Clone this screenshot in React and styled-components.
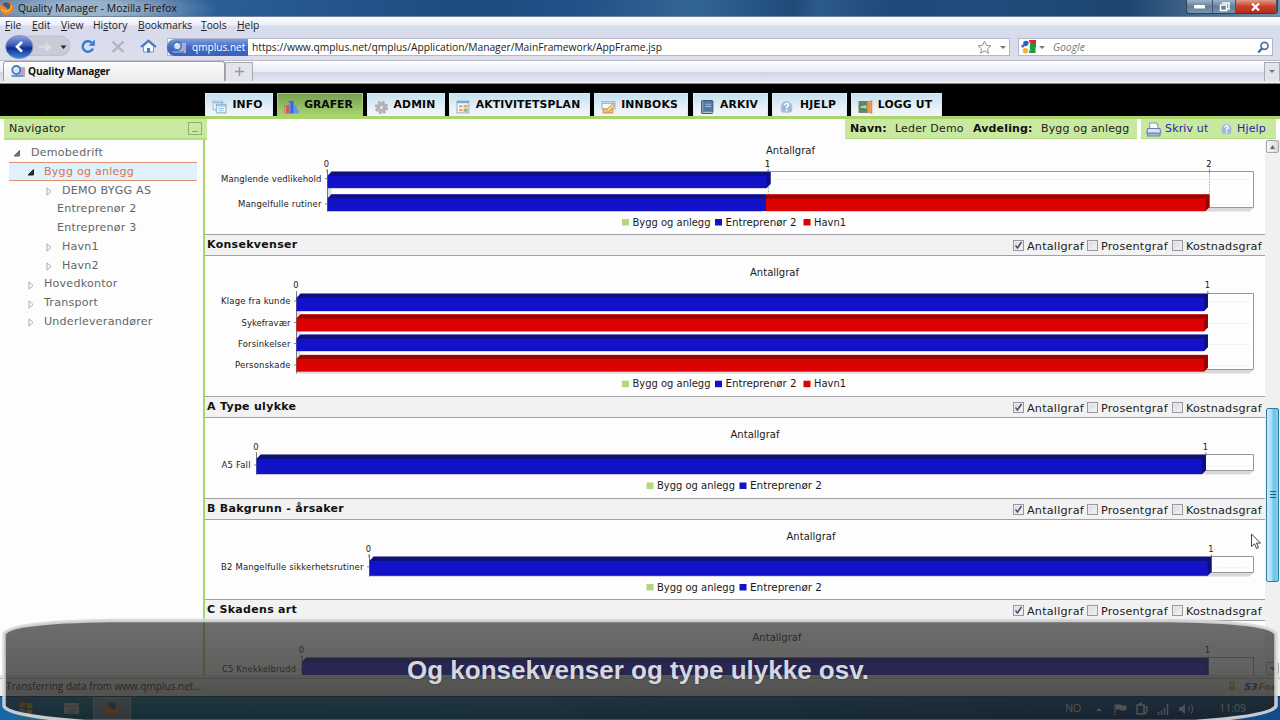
import React from 'react'
import styled, { createGlobalStyle, css } from 'styled-components'

const ui = `'Open Sans', 'Noto Sans', sans-serif`
const app = `'DejaVu Sans', Verdana, sans-serif`
const lime = '#a9d56b'
const pale = '#c9e8a0'
const BLUE = '#1212c8'
const RED = '#dc0202'
const GREEN = '#b4d67c'

const GlobalStyle = createGlobalStyle`
  * { box-sizing: border-box; }
  body { margin: 0; background: #fdfdfd; overflow: hidden; }
  svg { display: block; flex: none; }
`

/* ---------- data ---------- */

const menus = [
  { pre: '', key: 'F', rest: 'ile', width: 27 },
  { pre: '', key: 'E', rest: 'dit', width: 29 },
  { pre: '', key: 'V', rest: 'iew', width: 32 },
  { pre: 'Hi', key: 's', rest: 'tory', width: 45 },
  { pre: '', key: 'B', rest: 'ookmarks', width: 63 },
  { pre: '', key: 'T', rest: 'ools', width: 36 },
  { pre: '', key: 'H', rest: 'elp', width: 30 },
]

const tabs = [
  { label: 'INFO', icon: 'info', width: 68, gap: 4 },
  { label: 'GRAFER', icon: 'chart', width: 86, gap: 4, active: true },
  { label: 'ADMIN', icon: 'gear', width: 78, gap: 4 },
  { label: 'AKTIVITETSPLAN', icon: 'calendar', width: 141, gap: 4 },
  { label: 'INNBOKS', icon: 'inbox', width: 94, gap: 5 },
  { label: 'ARKIV', icon: 'book', width: 75, gap: 4 },
  { label: 'HJELP', icon: 'help', width: 75, gap: 4 },
  { label: 'LOGG UT', icon: 'exit', width: 91, gap: 0 },
]

const tree = [
  { label: 'Demobedrift', pad: 13, text: 31, state: 'open' },
  { label: 'Bygg og anlegg', pad: 27, text: 44, state: 'open', selected: true },
  { label: 'DEMO BYGG AS', pad: 45, text: 62, state: 'closed' },
  { label: 'Entreprenør 2', pad: 40, text: 57 },
  { label: 'Entreprenør 3', pad: 40, text: 57 },
  { label: 'Havn1', pad: 45, text: 62, state: 'closed' },
  { label: 'Havn2', pad: 45, text: 62, state: 'closed' },
  { label: 'Hovedkontor', pad: 27, text: 44, state: 'closed' },
  { label: 'Transport', pad: 27, text: 44, state: 'closed' },
  { label: 'Underleverandører', pad: 27, text: 44, state: 'closed' },
]

const legend3 = [
  { x: 622, w: 78, label: 'Bygg og anlegg', color: GREEN },
  { x: 715, w: 71, label: 'Entreprenør 2', color: BLUE },
  { x: 803.5, w: 32, label: 'Havn1', color: RED },
]
const legend2 = [
  { x: 646.5, w: 78, label: 'Bygg og anlegg', color: GREEN },
  { x: 739.5, w: 72, label: 'Entreprenør 2', color: BLUE },
]

// chart coordinates are page pixels, each svg has its own window onto them
const charts = {
  causes: {
    top: 140, height: 94, titleX: 790.5, titleY: 154, tickY: 166.5, axis: 327.5, frame: [171.5, 207.5],
    ticks: [[326.5, '0'], [767.5, '1'], [1209, '2']], grid: [[768.5, 160, 194], [1209.5, 160, 194]],
    rows: [
      { label: 'Manglende vedlikehold', w: 100.5, y: 181.5, bar: [172, 188], parts: [[327.5, 770.5, BLUE]] },
      { label: 'Mangelfulle rutiner', w: 83.5, y: 207, bar: [194.5, 211], parts: [[327.5, 766, BLUE], [766, 1209.5, RED]] },
    ],
    legend: legend3, legendY: 222,
  },
  consequences: {
    top: 256, height: 140, titleX: 774.5, titleY: 276, tickY: 288, axis: 296.5, frame: [293.5, 369.5],
    ticks: [[296, '0'], [1207.5, '1']], grid: [[1207.5, 291, 294]],
    rows: [
      { label: 'Klage fra kunde', w: 69.5, y: 304, bar: [294, 311], parts: [[296.5, 1208, BLUE]] },
      { label: 'Sykefravær', w: 49, y: 325.5, bar: [314.5, 331.3], parts: [[296.5, 1208, RED]] },
      { label: 'Forsinkelser', w: 52.5, y: 346.5, bar: [334.8, 351], parts: [[296.5, 1208, BLUE]] },
      { label: 'Personskade', w: 55.5, y: 368, bar: [355, 371.5], parts: [[296.5, 1208, RED]] },
    ],
    legend: legend3, legendY: 383.7,
  },
  accident: {
    top: 418, height: 80, titleX: 755, titleY: 438, tickY: 449.5, axis: 256.5, frame: [454.5, 470.5],
    ticks: [[256, '0'], [1205.5, '1']], grid: [],
    rows: [{ label: 'A5 Fall', w: 29, y: 468, bar: [455, 474], parts: [[256.5, 1206, BLUE]] }],
    legend: legend2, legendY: 485.5,
  },
  background: {
    top: 520, height: 79, titleX: 811, titleY: 539.5, tickY: 551.5, axis: 369.5, frame: [556.5, 572.5],
    ticks: [[368.5, '0'], [1211, '1']], grid: [],
    rows: [{ label: 'B2 Mangelfulle sikkerhetsrutiner', w: 142.5, y: 569.8, bar: [557, 575.7], parts: [[369.5, 1211.5, BLUE]] }],
    legend: legend2, legendY: 587,
  },
  injury: {
    top: 621, height: 54, titleX: 777, titleY: 641, tickY: 653, axis: 302, frame: [657.5, 680],
    ticks: [[301.5, '0'], [1207.5, '1']], grid: [],
    rows: [{ label: 'C5 Knekkelbrudd', w: 74, y: 672, bar: [658, 679], parts: [[302, 1208.5, BLUE]] }],
    legend: [], legendY: 0,
  },
}

/* ---------- browser chrome ---------- */

const Window = styled.div`
  position: relative;
  display: flex;
  flex-direction: column;
  width: 1280px;
  height: 720px;
  overflow: hidden;
  font-family: ${app};
  color: #111;
`

const TitleBar = styled.header`
  display: flex;
  justify-content: space-between;
  height: 17px;
  border-bottom: 1px solid #70849c;
  background:
    radial-gradient(ellipse 130px 24px at 88px 9px, rgba(170, 190, 210, .85) 30%, transparent),
    linear-gradient(100deg, #44709f 0, #2d5f98 15%, #1d4a80 37%, #225088 45%, #336594 54%, #1f4b79 62%, #2c5a8a 64%, #1d4878 70%, #214c7c 76%, #1c456f 88%, #7090ae 100%);
`

const TitleText = styled.div`
  display: flex;
  align-items: center;
  gap: 4px;
  font: 10.4px/16px ${ui};
  color: #111;
`

const WindowButtons = styled.div`
  display: flex;
  width: 92px;
  height: 14px;
  margin-right: 2px;
  border: 1px solid #2b3f55;
  border-top: 0;
  border-radius: 0 0 4px 4px;
  overflow: hidden;
`

const WindowButton = styled.span`
  display: flex;
  align-items: center;
  justify-content: center;
  width: ${p => p.$width}px;
  border-right: 1px solid #40566f;
  background: ${p => p.$close
    ? 'linear-gradient(#e09a8a, #c8402c 50%, #b82a18)'
    : 'linear-gradient(#9db2c8, #637f9d 50%, #7a94ae)'};
`

const MenuBar = styled.nav`
  display: flex;
  height: 18px;
  padding-left: 5px;
  background: linear-gradient(#fbfcfe 0, #eceef7 45%, #d8dbeb 50%, #d8dbeb);
  font: 10.3px/17px ${ui};
  color: #222;
`

const MenuItem = styled.span`
  width: ${p => p.$width}px;
  white-space: nowrap;
`

const Toolbar = styled.div`
  display: flex;
  align-items: center;
  height: 25px;
  padding: 0 7px 0 4px;
  background: linear-gradient(#d8dbeb, #dddfec);
`

const Field = styled.div`
  display: flex;
  align-items: center;
  width: ${p => p.$width}px;
  height: 18px;
  margin-left: ${p => p.$gap}px;
  border: 1px solid #b4b8c6;
  background: #fff;
  font: 10.25px/16px ${ui};
  color: #222;
`

const SiteBadge = styled.span`
  display: flex;
  align-items: center;
  gap: 6px;
  width: 81px;
  height: 17px;
  margin: 0 4px 0 -1px;
  padding-left: 4px;
  border-radius: 8px 0 0 8px;
  background: linear-gradient(#7f9fe0, #4168c4 50%, #3a62bd);
  font-size: 10.1px;
  color: #fff;
`

const SearchHint = styled.span`
  display: flex;
  align-items: center;
  flex: 1;
  padding-left: 2px;
  font-size: 10.4px;
  font-style: italic;
  color: #777;
`

const Grow = styled.span`
  flex: 1;
`

const Caret = styled.i`
  width: 0;
  margin: 0 ${p => p.$right || p.$gap}px 0 ${p => p.$gap}px;
  border: 3px solid transparent;
  border-top-color: #777;
  border-bottom: 0;
`

const TabStrip = styled.div`
  display: flex;
  align-items: flex-end;
  height: 24px;
  padding: 0 0 2px 3px;
  border-top: 1px solid #b9bccb;
  border-bottom: 1px solid #8a8a8a;
  background: linear-gradient(#fdfdff, #e9ebf6 48%, #d3d6e6 52%, #e2e4ec 88%, #f4f4f4);
`

const BrowserTab = styled.div`
  display: flex;
  align-items: center;
  gap: 3px;
  width: 222px;
  height: 20px;
  padding-left: 6px;
  border: 1px solid #9a9ca6;
  border-bottom: 0;
  border-radius: 3px 3px 0 0;
  background: linear-gradient(#fcfcfc, #ebebeb);
  font: bold 10.2px/18px ${ui};
  letter-spacing: -.2px;
  color: #111;
`

const StripButton = styled.span`
  display: flex;
  align-items: center;
  justify-content: center;
  width: ${p => p.$width}px;
  height: 19px;
  border: 1px solid #a8aab4;
  border-bottom: 0;
  background: #e4e5ec;
`

/* ---------- application ---------- */

const AppBar = styled.nav`
  display: flex;
  align-items: flex-end;
  height: 36px;
  padding-left: 205px;
  border-bottom: 3px solid ${lime};
  background: #000;
`

const AppTab = styled.div`
  display: flex;
  align-items: center;
  width: ${p => p.$width}px;
  height: 23px;
  margin-right: ${p => p.$gap}px;
  padding: 0 0 1px 6px;
  border: 1px solid #d8ecf4;
  border-bottom: 0;
  background: linear-gradient(#c4e1f0, #ecf2f8 70%, #f2f4f8);
  font-size: 10.8px;
  font-weight: bold;
  letter-spacing: .15px;
  white-space: nowrap;
  color: #080808;

  svg { margin: 5px 0 0; }

  ${p => p.$active && css`
    border-color: #a5cf78;
    background: linear-gradient(#789f50, #98c668 70%, ${lime});
    letter-spacing: 0;
  `}
`

const TabLabel = styled.span`
  flex: 1;
  text-align: center;
  padding-right: 4px;
`

const Body = styled.div`
  display: flex;
  height: 556px;
  background: #fdfdfd;
`

const Sidebar = styled.aside`
  width: 205px;
  border-right: 2px solid ${lime};
  font-size: 11.1px;
  letter-spacing: .22px;
`

const PanelHeader = styled.div`
  display: flex;
  align-items: center;
  justify-content: space-between;
  width: 203px;
  height: 21px;
  margin-left: 4px;
  padding: 0 5px 1px;
  border-bottom: 2px solid #b7dc88;
  background: ${pale};
  color: #222;
`

const Minimize = styled.span`
  display: flex;
  align-items: flex-end;
  justify-content: center;
  width: 14px;
  height: 13px;
  padding-bottom: 2px;
  border: 1px solid #90b070;

  &::after {
    content: '';
    width: 6px;
    border-bottom: 1px solid #87a566;
  }
`

const Tree = styled.ul`
  margin: 3px 6px 0 9px;
  padding: 0;
  list-style: none;
`

const TreeItem = styled.li`
  display: flex;
  align-items: center;
  height: 18.75px;
  padding-left: ${p => p.$pad - 9}px;
  color: #666;
  white-space: nowrap;

  ${p => p.$selected && css`
    height: 19px;
    border: 1px solid #e0916f;
    border-width: 1px 0;
    background: #dff1fc;
    color: #d9734f;
  `}
`

const Marker = styled.span`
  width: ${p => p.$width}px;
  padding-top: 3px;
`

const Main = styled.main`
  display: flex;
  flex-direction: column;
  width: 1060px;
`

const InfoRow = styled.div`
  display: flex;
  flex: none;
  justify-content: flex-end;
  gap: 4px;
  height: 21px;
  margin-right: -11px;
  font-size: 11px;
  letter-spacing: .15px;
`

const InfoBox = styled.div`
  display: flex;
  align-items: center;
  width: ${p => p.$width}px;
  height: 20px;
  padding-left: 5px;
  border-bottom: 1px solid #b7dc88;
  background: ${pale};
  color: ${p => (p.$link ? '#2525a8' : '#222')};
  white-space: nowrap;
`

const InfoPair = styled.span`
  display: flex;
  align-items: center;
  width: ${p => p.$width}px;

  b { flex: none; width: ${p => p.$label}px; color: #111; }
  svg { margin: 2px 4px 0 0; }
`

const SectionHeader = styled.div`
  display: flex;
  align-items: center;
  justify-content: space-between;
  flex: none;
  height: 22px;
  padding: 0 1px 0 2px;
  border: 1px solid #a2a2a6;
  border-width: 1px 0;
  background: #f2f2f2;
`

const SectionTitle = styled.h2`
  margin: 0;
  font-size: 11px;
  line-height: 20px;
  letter-spacing: .3px;
  color: #111;
`

const Options = styled.div`
  display: flex;
  align-items: center;
  font-size: 11.2px;
  letter-spacing: .22px;
  color: #222;
`

const Option = styled.label`
  display: flex;
  align-items: center;
  gap: 3px;
  width: ${p => p.$width}px;
  white-space: nowrap;

  span { padding-top: 2px; }
`

const CheckBox = styled.i`
  display: flex;
  align-items: center;
  justify-content: center;
  flex: none;
  width: 11px;
  height: 11px;
  border: 1px solid #98989e;
  background: linear-gradient(135deg, #d8d8dc, #f6f6f6);
  box-shadow: inset 0 0 0 1px #ececec;
`

const ScrollBar = styled.div`
  display: flex;
  flex-direction: column;
  width: 15px;
  margin-top: 21px;
  padding-left: 1px;
  background: #f0f0f0;
`

const ScrollButton = styled.span`
  display: flex;
  align-items: center;
  justify-content: center;
  width: 13px;
  height: 13px;
  border: 1px solid #a6a6a6;
  border-radius: 2px;
  background: linear-gradient(90deg, #f6f6f6, #d8d8d8);
`

const Thumb = styled.span`
  display: flex;
  flex-direction: column;
  align-items: center;
  justify-content: center;
  gap: 1px;
  width: 13px;
  height: 174px;
  margin-top: 255px;
  border: 1px solid #2f7da0;
  border-radius: 2px;
  background: linear-gradient(90deg, #c8ecfb 0, #a9dff6 40%, #6cc4e8 60%, #83cfee);

  i { width: 6px; border-bottom: 1px solid #245c78; margin-bottom: 1px; }
`

const StatusBar = styled.footer`
  display: flex;
  align-items: center;
  justify-content: space-between;
  height: 21px;
  padding: 0 3px 2px 6px;
  border-top: 3px solid #e2e2e2;
  background: #ececec;
  box-shadow: inset 0 1px #b4b4b4;
  font: 10px/16px ${ui};
  color: #222;
`

const StatusRight = styled.span`
  display: flex;
  align-items: center;
  font: italic bold 9.5px ${app};

  svg { margin-right: 8px; }
  b { color: #2238c0; }
  em { color: #d87020; margin-left: 1px; }
`

const Taskbar = styled.div`
  display: flex;
  align-items: center;
  height: 24px;
  border-top: 1px solid #10384c;
  background: linear-gradient(90deg, #1468a8, #10789e 6%, #1478a4 30%, #10689c 55%, #0c5088 80%, #104c8c);
  color: #fff;
`

const TaskSlot = styled.span`
  display: flex;
  align-items: center;
  justify-content: center;
  width: ${p => p.$width}px;
  height: 23px;
  margin-left: ${p => p.$gap || 0}px;
  ${p => p.$active && css`
    border: 1px solid #a8c2cc;
    background: #7fa4b0;
  `}
`

const Tray = styled.div`
  display: flex;
  align-items: center;
  margin-left: auto;
  padding-right: 34px;
  font: 10.5px/23px ${ui};
`

const CaptionBox = styled.div`
  position: absolute;
  left: 0;
  bottom: 0;
  width: 1280px;
  height: 104px;
`

const CaptionText = styled.p`
  position: absolute;
  inset: 37px 4px auto 0;
  margin: 0;
  text-align: center;
  font: bold 26px/34px 'Liberation Sans', Arial, sans-serif;
  color: #d6d6e0;
  text-shadow: 0 0 2px rgba(20, 20, 30, .7);
`

const Pointer = styled.svg`
  position: absolute;
  left: 1250px;
  top: 533px;
`

/* ---------- icons ---------- */

const QmIcon = () => (
  <svg width="15" height="12" viewBox="0 0 15 12">
    <rect x="8" y="2" width="7" height="10" fill="#9fb4dc" />
    <rect x="12" y="4" width="3" height="7" fill="#c8a0b0" />
    <path d="M1 10h12v2H2z" fill="#6f93cf" />
    <circle cx="6.3" cy="5" r="4" fill="#cfe2f6" stroke="#4a78b8" strokeWidth="1.8" />
    <path d="M4 4.5q1-2 3-1.6" fill="none" stroke="#fff" />
  </svg>
)

const FirefoxIcon = ({ size = 14 }) => (
  <svg width={size} height={size} viewBox="0 0 16 16">
    <circle cx="7.5" cy="7.5" r="7.5" fill="#e8792a" />
    <circle cx="7" cy="6" r="4.6" fill="#315f9c" />
    <path d="M0 5q3-2 5 1 1 2 3 1-1 3 2 2.5 3-1 3-6.5 4 5 1 9.500-4 5-9.500 2.500Q-.5 12 0 5z" fill="#ef8327" />
    <path d="M2 9q4 5 9 1 2-2 2-5" fill="none" stroke="#f8c04c" strokeWidth="1.3" />
  </svg>
)

const icons = {
  info: (
    <>
      <rect x="1" y="1" width="9" height="8" fill="#eef6fb" stroke="#9cc0d8" />
      <path d="M1 2.500h9" stroke="#7fb0d4" />
      <rect x="4" y="4" width="9" height="8" fill="#f2f8fc" stroke="#86aecb" />
      <path d="M4 5.500h9M6 8h5M6 10h5" stroke="#8fbbdc" />
    </>
  ),
  chart: (
    <>
      <rect x=".5" y="5" width="4" height="7.5" fill="#e0505a" />
      <rect x="4.5" y="1" width="4.500" height="11.5" fill="#3f62d8" />
      <rect x="9" y="5" width="3" height="7.5" fill="#6f8fe4" />
      <path d="M11.500 9h3v3.500h-3z" fill="#6f9ad2" />
      <path d="M5.500 2v10M1.500 6v6" stroke="#9fb5f5" strokeWidth=".8" />
    </>
  ),
  gear: (
    <>
      <circle cx="7" cy="7" r="5.2" fill="none" stroke="#a9a9a9" strokeWidth="2" strokeDasharray="2.2 1.9" />
      <circle cx="7" cy="7" r="3.500" fill="none" stroke="#b4b4b4" strokeWidth="2.800" />
      <circle cx="7" cy="7" r="1.8" fill="#ebf1f5" stroke="#9a9a9a" strokeWidth=".8" />
    </>
  ),
  calendar: (
    <>
      <rect x="1" y="1" width="11" height="11" fill="#f7fafc" stroke="#94b4cb" />
      <path d="M1 2h11" stroke="#7da9cc" strokeWidth="2" />
      <path d="M3 5h3v2H3zM3 8.500h3v2H3z" fill="#ef9f56" />
      <path d="M7 4.500h4v2.500H7z" fill="#e8aa62" />
      <path d="M7 8h4v3H7z" fill="#92ba76" />
    </>
  ),
  inbox: (
    <>
      <rect x="1" y="1.5" width="12" height="7" fill="#f7f9fb" stroke="#9fb6c8" />
      <path d="M1 3h12" stroke="#7fa9cc" />
      <path d="M2 8.500h9V12H2z" fill="#f1c76a" stroke="#cf9b45" />
      <path d="M5 9l6-5.500 2 2L7 11z" fill="#f6d978" stroke="#b99652" strokeWidth=".8" />
    </>
  ),
  book: (
    <>
      <rect x="1.5" y=".5" width="10.5" height="12" rx="1" fill="#55779f" stroke="#3c5c85" />
      <path d="M2.500 1v11" stroke="#89a5c6" />
      <path d="M5 4h5.500M5 6h5.500" stroke="#a4bdd8" />
      <path d="M3 11.500h9" stroke="#c5d6e6" />
    </>
  ),
  help: (
    <>
      <circle cx="7" cy="6.5" r="5.2" fill="#9db8da" stroke="#b9cce4" />
      <path d="M2 8q-1 4 3 4l-1-3zM12 8q1 4-3 4l1-3z" fill="#a5bade" />
      <path d="M5.200 5q.2-1.800 2-1.700 1.800.2 1.600 1.700-.1.900-1.700 1.700v1" fill="none" stroke="#fff" strokeWidth="1.5" />
      <circle cx="7.1" cy="9.5" r=".9" fill="#fff" />
    </>
  ),
  exit: (
    <>
      <rect x="1" y="1.5" width="8" height="10" fill="#5d8b6a" stroke="#6d7b64" />
      <path d="M2 5h4V3l3 3.500-3 3V8H2z" fill="#a5dda2" stroke="#41704d" strokeWidth=".7" />
      <path d="M8.500 2L13 .5v12L8.500 11z" fill="#e69a55" stroke="#c77f42" strokeWidth=".6" />
    </>
  ),
  printer: (
    <>
      <path d="M3.500 6V1h6l1.500 1.500V6" fill="#fff" stroke="#7f97cc" />
      <path d="M1.500 6h11.500l.8 4.500H.8z" fill="#dbe2ef" stroke="#6b7fb4" />
      <path d="M1.500 10.500h11.500V13H1.500z" fill="#a9b8d8" stroke="#6b7fb4" />
    </>
  ),
}

const Icon = ({ name, size = 14 }) => (
  <svg width={size} height={size} viewBox="0 0 14 14">{icons[name]}</svg>
)

const NavButtons = () => (
  <svg width="160" height="25" viewBox="4 35 160 25">
    <defs>
      <linearGradient id="back" x1="0" y1="0" x2="0" y2="1">
        <stop offset="0" stopColor="#8fa6e2" />
        <stop offset=".45" stopColor="#3455b4" />
        <stop offset=".55" stopColor="#102c92" />
        <stop offset="1" stopColor="#3c8ae0" />
      </linearGradient>
    </defs>
    <rect x="8" y="36" width="62" height="19.5" rx="9.5" fill="#c9cbd6" stroke="#b0b2c0" strokeWidth=".6" />
    <ellipse cx="19.3" cy="47" rx="13.6" ry="11.5" fill="url(#back)" stroke="#8791b8" />
    <path d="M22 42l-5 4.800 5 4.800" fill="none" stroke="#fff" strokeWidth="2.6" />
    <path d="M39 47h9M45.500 43.500l4 3.500-4 3.500" fill="none" stroke="#dcdde6" strokeWidth="2.4" />
    <path d="M60.500 45.500h6l-3 3.500z" fill="#222" />
    <path d="M91.500 42.500a5.300 5.300 0 1 0 1.400 6" fill="none" stroke="#3b78cf" strokeWidth="2.4" />
    <path d="M94.800 39.500v6.300h-6.200z" fill="#3b78cf" />
    <path d="M112.500 41.500l11 10.500M123.500 41.500l-11 10.500" stroke="#b2b4bd" strokeWidth="2.4" />
    <path d="M143.500 46.500V52h10v-5.500l-5-4.500z" fill="#f5f8fd" stroke="#6f93cb" />
    <path d="M141 47l7.500-6.500L156 47" fill="none" stroke="#4277c4" strokeWidth="2" />
    <rect x="147" y="48" width="3" height="4.5" fill="#4a7ac0" />
  </svg>
)

const StarIcon = () => (
  <svg width="15" height="15" viewBox="0 0 15 15">
    <path d="M7.500 1.200l1.900 4.200 4.500.4-3.400 3 1 4.500-4-2.400-4 2.400 1-4.500-3.400-3 4.500-.4z" fill="#fff" stroke="#8d8f96" />
  </svg>
)

const GoogleIcon = () => (
  <svg width="15" height="14" viewBox="0 0 15 14">
    <path d="M8 0h7v7H9.500z" fill="#d92a2a" />
    <path d="M9 3.500h5.500V13H8z" fill="#1f9a3a" />
    <circle cx="5" cy="3.5" r="2.8" fill="#2c5fc4" />
    <circle cx="1.8" cy="6" r="1.6" fill="#3f70cc" />
    <circle cx="4.5" cy="10.7" r="2.8" fill="#f2b53c" />
    <path d="M6.500 5l3-3-1 5 1 4-2-2-2-1z" fill="#fff" />
  </svg>
)

const Triangle = ({ state, dark }) => (
  <svg width="9" height="9" viewBox="0 0 9 9">
    {state === 'open' && <path d="M1 7h5.500V1.500z" fill={dark ? '#2e2e2e' : '#777'} stroke={dark ? '#222' : '#666'} />}
    {state === 'closed' && <path d="M2 .8v7.400l4-3.700z" fill="#fff" stroke="#aaa" />}
  </svg>
)

/* ---------- charts ---------- */

const ChartText = styled.text`
  font-family: ${app};
  font-size: ${p => p.$size}px;
  fill: #1a1a1a;
`

const shade = color => (color === BLUE ? '#10107c' : '#960404')

function Bar({ from, to, color, y1, y2, first, last }) {
  const d = 4
  const a = first ? d : 0
  const b = last ? d : 0
  return (
    <g>
      <path d={`M${from} ${y1 + a}l${a} ${-a}H${to}V${y2 - b}l${-b} ${b}H${from}z`} fill={color} />
      <path d={`M${from} ${y1 + d}L${from + a} ${y1}H${to}l${-b} ${d}z`} fill={shade(color)} />
      {last && <path d={`M${to} ${y1}v${y2 - y1 - d}l${-d} ${d}V${y1 + d}z`} fill={shade(color)} />}
      <path d={`M${from + 3} ${y1}H${to}M${from} ${y2}H${to - d}`} stroke={color} strokeOpacity=".45" strokeWidth=".8" />
    </g>
  )
}

function Chart({ top, height, titleX, titleY, tickY, axis, frame, ticks, grid, rows, legend, legendY }) {
  const [f1, f2] = frame
  return (
    <svg width="1060" height={height} viewBox={`205 ${top} 1060 ${height}`}>
      <path d={`M${axis} ${f2 + 4}l4-4H1254l-4.500 4z`} fill="#d9d9dc" />
      <path d={`M${axis} ${f1 + 4}l4-4V${f2}l-4 4z`} fill="#dedeea" />
      <path d={`M${axis + 4} ${f1}H1253.500V${f2}H${axis + 4}`} fill="#fefefe" stroke="#98989c" />
      {rows.map(r => (
        <path key={r.label} d={`M${axis + 5} ${r.y - 2}H1250`} stroke="#ececec" strokeDasharray="2 1" />
      ))}
      <path d={`M${axis} ${f1 - 2}V${f2 + 4}`} stroke="#77777c" />
      {grid.map(g => (
        <path key={g[0]} d={`M${g[0]} ${g[1]}V${g[2]}`} stroke="#bbb" strokeDasharray="2 1" />
      ))}
      {ticks.map(t => (
        <React.Fragment key={t[0]}>
          <path d={`M${t[0] + .5} ${f1 - 2}v3`} stroke="#777" />
          <ChartText x={t[0]} y={tickY} $size={8.3} textAnchor="middle">{t[1]}</ChartText>
        </React.Fragment>
      ))}
      <ChartText x={titleX} y={titleY} $size={9.7} textAnchor="middle" textLength="49" lengthAdjust="spacingAndGlyphs">
        Antallgraf
      </ChartText>
      {rows.map(r => (
        <g key={r.label}>
          <ChartText x={axis - 6 - r.w} y={r.y} $size={8.5} textLength={r.w}>{r.label}</ChartText>
          <path d={`M${axis - 2.5} ${r.y - 3}h2.500`} stroke="#888" />
          {r.parts.map((p, i) => (
            <Bar
              key={p[0]}
              from={p[0]} to={p[1]} color={p[2]}
              y1={r.bar[0]} y2={r.bar[1]}
              first={i === 0} last={i === r.parts.length - 1}
            />
          ))}
        </g>
      ))}
      {legend.map(l => (
        <g key={l.x}>
          <rect x={l.x} y={legendY - 3} width="7" height="6.5" fill={l.color} />
          <ChartText x={l.x + 10.5} y={legendY + 3.7} $size={9.7} textLength={l.w} lengthAdjust="spacingAndGlyphs">
            {l.label}
          </ChartText>
        </g>
      ))}
    </svg>
  )
}

function Section({ title, chart }) {
  return (
    <>
      <SectionHeader>
        <SectionTitle>{title}</SectionTitle>
        <Options>
          <Option $width={74}>
            <CheckBox>
              <svg width="9" height="9" viewBox="0 0 9 9">
                <path d="M1.500 4.500l2 2.500L7.500 1" fill="none" stroke="#41466e" strokeWidth="1.4" />
              </svg>
            </CheckBox>
            <span>Antallgraf</span>
          </Option>
          <Option $width={85}><CheckBox /><span>Prosentgraf</span></Option>
          <Option $width={92}><CheckBox /><span>Kostnadsgraf</span></Option>
        </Options>
      </SectionHeader>
      <Chart {...chart} />
    </>
  )
}

/* ---------- page ---------- */

function Browser() {
  return (
    <>
      <TitleBar>
        <TitleText><FirefoxIcon /><span>Quality Manager - Mozilla Firefox</span></TitleText>
        <WindowButtons>
          <WindowButton $width={27}>
            <svg width="11" height="4"><rect width="11" height="3.5" rx="1" fill="#fff" /></svg>
          </WindowButton>
          <WindowButton $width={23}>
            <svg width="11" height="10" viewBox="0 0 11 10">
              <path d="M3 1h7v6H8M1.500 3h6v5.500h-6z" fill="none" stroke="#fff" strokeWidth="1.5" />
            </svg>
          </WindowButton>
          <WindowButton $width={42} $close>
            <svg width="9" height="8" viewBox="0 0 9 8"><path d="M1 .5l7 7M8 .5l-7 7" stroke="#fff" strokeWidth="2.2" /></svg>
          </WindowButton>
        </WindowButtons>
      </TitleBar>
      <MenuBar>
        {menus.map(m => (
          <MenuItem key={m.rest} $width={m.width}>{m.pre}<u>{m.key}</u>{m.rest}</MenuItem>
        ))}
      </MenuBar>
      <Toolbar>
        <NavButtons />
        <Field $width={846} $gap={3}>
          <SiteBadge><QmIcon />qmplus.net</SiteBadge>
          <span>https://www.qmplus.net/qmplus/Application/Manager/MainFramework/AppFrame.jsp</span>
          <Grow />
          <StarIcon />
          <Caret $gap={8} $right={3} />
        </Field>
        <Field $width={256} $gap={8}>
          <SearchHint><GoogleIcon /><Caret $gap={3} $right={8} />Google</SearchHint>
          <svg width="15" height="13" viewBox="0 0 15 13">
            <circle cx="7.5" cy="4.8" r="3.5" fill="none" stroke="#4a76b0" strokeWidth="1.7" />
            <path d="M5 7.500L1.200 11.500" stroke="#3a66a4" strokeWidth="2.2" />
          </svg>
        </Field>
      </Toolbar>
      <TabStrip>
        <BrowserTab><QmIcon />Quality Manager</BrowserTab>
        <StripButton $width={28}>
          <svg width="9" height="9"><path d="M4.500 0v9M0 4.500h9" stroke="#999" strokeWidth="1.5" /></svg>
        </StripButton>
        <Grow />
        <StripButton $width={16}><Caret $gap={1} /></StripButton>
      </TabStrip>
    </>
  )
}

export default function App() {
  return (
    <Window>
      <GlobalStyle />
      <Browser />
      <AppBar>
        {tabs.map(t => (
          <AppTab key={t.label} $width={t.width} $gap={t.gap} $active={t.active}>
            <Icon name={t.icon} size={15} />
            <TabLabel>{t.label}</TabLabel>
          </AppTab>
        ))}
      </AppBar>
      <Body>
        <Sidebar>
          <PanelHeader>Navigator<Minimize /></PanelHeader>
          <Tree>
            {tree.map(n => (
              <TreeItem key={n.label} $pad={n.pad} $selected={n.selected}>
                <Marker $width={n.text - n.pad}><Triangle state={n.state} dark={n.selected} /></Marker>
                {n.label}
              </TreeItem>
            ))}
          </Tree>
        </Sidebar>
        <Main>
          <InfoRow>
            <InfoBox $width={292}>
              <InfoPair $width={123} $label={45}><b>Navn:</b>Leder Demo</InfoPair>
              <InfoPair $label={68}><b>Avdeling:</b>Bygg og anlegg</InfoPair>
            </InfoBox>
            <InfoBox $width={135} $link>
              <InfoPair $width={74}><Icon name="printer" size={15} />Skriv ut</InfoPair>
              <InfoPair><Icon name="help" size={13} />Hjelp</InfoPair>
            </InfoBox>
          </InfoRow>
          <Chart {...charts.causes} />
          <Section title="Konsekvenser" chart={charts.consequences} />
          <Section title="A Type ulykke" chart={charts.accident} />
          <Section title="B Bakgrunn - årsaker" chart={charts.background} />
          <Section title="C Skadens art" chart={charts.injury} />
        </Main>
        <ScrollBar>
          <ScrollButton><svg width="5" height="4"><path d="M0 4h5L2.500 0z" fill="#666" /></svg></ScrollButton>
          <Thumb><i /><i /><i /></Thumb>
          <Grow />
          <ScrollButton><svg width="5" height="4"><path d="M0 0h5L2.500 4z" fill="#666" /></svg></ScrollButton>
        </ScrollBar>
      </Body>
      <StatusBar>
        <span>Transferring data from www.qmplus.net...</span>
        <StatusRight>
          <svg width="8" height="10" viewBox="0 0 8 10">
            <path d="M2 4.500V3a2 2 0 0 1 4 0v1.500" fill="none" stroke="#998a50" strokeWidth="1.2" />
            <rect x="1" y="4.5" width="6" height="5" fill="#d8b848" />
          </svg>
          <b>S3</b><em>Fox</em>
        </StatusRight>
      </StatusBar>
      <Taskbar>
        <TaskSlot $width={46} $gap={3}>
          <svg width="32" height="23" viewBox="0 0 32 24">
            <circle cx="16" cy="12" r="13" fill="#2a6484" />
            <path d="M9 6q3-2 6-.5v5.500q-3-1.500-6.500.5z" fill="#f07838" />
            <path d="M16.500 6q3 1.500 6-.5v6q-3 1.500-6 0z" fill="#9acc50" />
            <path d="M8.500 13q3-2 6.500-.5v6q-3-1.500-6.500.5z" fill="#6cb4e8" />
            <path d="M16.500 13q3 1.500 6-.5v6q-3 1.500-6 0z" fill="#f4cc50" />
          </svg>
        </TaskSlot>
        <TaskSlot $width={44}>
          <svg width="15" height="11" viewBox="0 0 15 11">
            <rect width="15" height="11" rx="1" fill="#c9d5c4" />
            <path d="M0 3h15" stroke="#8aa8b4" />
            <rect x="3" y="5" width="9" height="6" fill="#a9c2cc" />
          </svg>
        </TaskSlot>
        <TaskSlot $width={38} $active><FirefoxIcon size={15} /></TaskSlot>
        <Tray>
          <span>NO</span>
          <svg width="106" height="14" viewBox="0 0 106 14">
            <path d="M15 9h6l-3-3z" fill="#fff" />
            <path d="M34 2v11M35 3h5l1 1h4v4h-5l-1-1h-4z" fill="#fff" stroke="#fff" strokeWidth="1" />
            <path d="M56 3h7v9h-7zM58 1.500h3M63 5h3v3q0 3-3 4" fill="none" stroke="#fff" strokeWidth="1.5" />
            <path d="M77.500 10v3M80.500 8v5M83.500 5.500V13M86.500 2v11" stroke="#fff" strokeWidth="1.5" />
            <path d="M98 5h2.500L104 2v10l-3.500-3H98z" fill="#fff" />
          </svg>
          <svg width="32" height="14" viewBox="0 0 32 14">
            <path d="M1.500 4.500q2 2.500 0 5M4 2.500q3.500 4.500 0 9" fill="none" stroke="#fff" />
          </svg>
          <span>11:09</span>
        </Tray>
      </Taskbar>
      <Pointer width="12" height="17" viewBox="0 0 12 17">
        <path d="M1.500 1v12.500l3-2.700 2 4.700 2-.9-2-4.500h4z" fill="#fff" stroke="#444" />
      </Pointer>
      <CaptionBox>
        <svg width="1280" height="104" viewBox="0 616 1280 104">
          <defs>
            <linearGradient id="veil" x1="0" y1="0" x2="0" y2="1">
              <stop offset="0" stopColor="#303030" stopOpacity=".7" />
              <stop offset=".5" stopColor="#2e2e2c" stopOpacity=".76" />
              <stop offset="1" stopColor="#181818" stopOpacity=".78" />
            </linearGradient>
          </defs>
          <path
            d="M4 634Q10 622 110 620.500H1170Q1270 622 1276 634V706Q1272 716 1195 721.500H85Q8 716 4 706z"
            fill="url(#veil)" stroke="#d8d8da" strokeOpacity=".9" strokeWidth="3.5"
          />
        </svg>
        <CaptionText>Og konsekvenser og type ulykke osv.</CaptionText>
      </CaptionBox>
    </Window>
  )
}
